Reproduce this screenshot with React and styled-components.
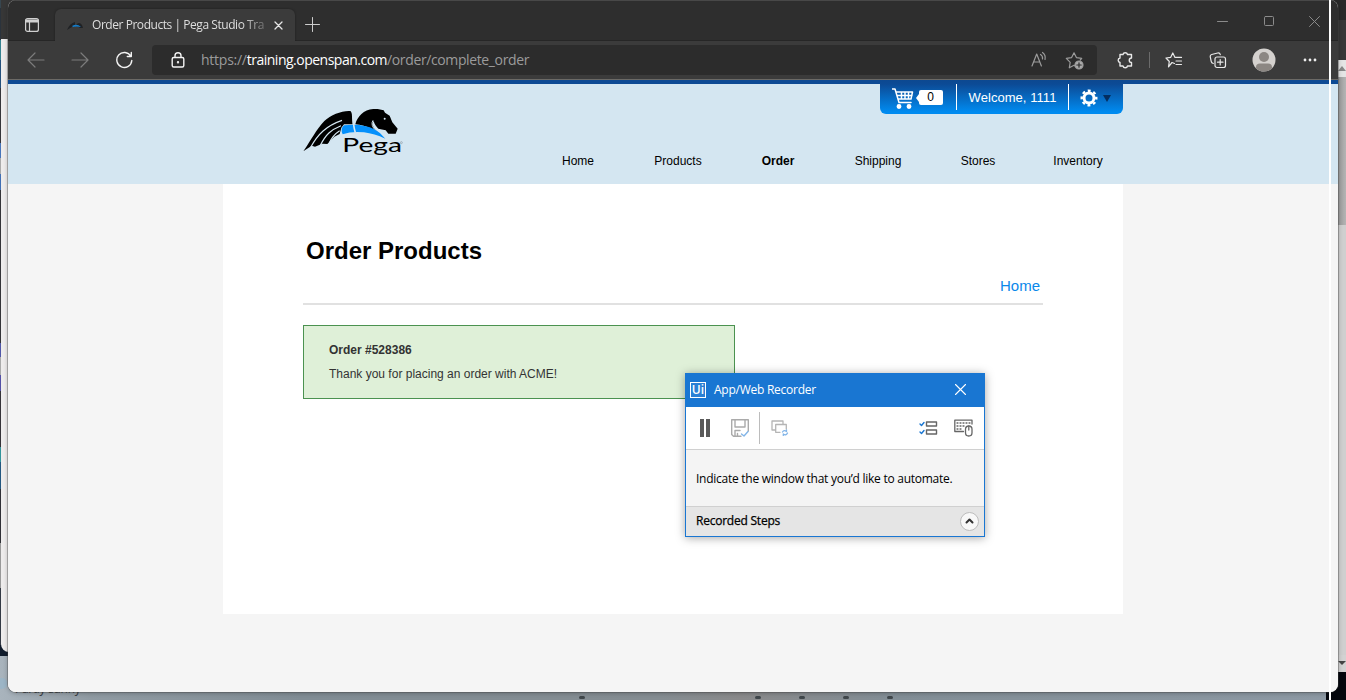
import React from "react";
import styled, { createGlobalStyle } from "styled-components";

const Global = createGlobalStyle`
  * { box-sizing: border-box; }
  html, body { margin: 0; padding: 0; overflow: hidden; }
  body { font-family: "Liberation Sans", Arial, sans-serif; }
  svg { display: block; flex: none; }
`;

const ui = `"Open Sans", "Noto Sans", sans-serif`;

const Desktop = styled.div`
  position: relative;
  width: 1346px;
  height: 700px;
  overflow: hidden;
  background: linear-gradient(90deg, #a9b4bd 0, #909ba3 90px, #818d95 300px, #858d92 660px, #8a8a8b 740px, #828e96 900px, #8d99a4 1320px);
`;
const LeftSliver = styled.div`
  position: absolute;
  left: 0;
  top: 0;
  width: 8px;
  height: 656px;
  background: linear-gradient(#37464f 0 8px, #2b333c 8px 40px, #368391 40px 60px, #24507c 60px 88px, #35353a 88px 143px, #4875ba 143px 158px, #aaa 158px 174px, #416fb4 174px 190px, #343438 190px 343px, #5057a8 343px 357px, #aaa 357px 375px, #5350a6 375px 391px, #353338 391px 447px, #32949b 447px 462px, #235780 462px 489px, #303036 489px 543px, #999 543px 588px, #333944 588px 645px, #101c2c 645px);
`;
const LeftWindow = styled.div`
  position: absolute;
  left: 1px;
  top: 0;
  width: 20px;
  height: 652px;
  border-radius: 0 0 0 8px;
  background: linear-gradient(#373737 0 39px, #eeecec 39px);
`;
const RightStack = styled.div`
  position: absolute;
  right: 0;
  top: 0;
  width: 20px;
  height: 700px;
  padding-left: 12px;
  display: flex;
  flex-direction: column;
  background: linear-gradient(#292929 0 20px, #373737 20px 60px, #cfcfcf 60px 671px, #04070d 671px);
`;
const ScrollArrow = styled.div`
  width: 8px;
  height: ${(p) => p.$h}px;
  margin-top: ${(p) => p.$gap || 0}px;
  background: ${(p) => p.$bg};
`;
const Thumb = styled.div`
  height: 148px;
  background: linear-gradient(90deg, #999, #b4b4b4);
`;
const TaskLabel = styled.div`
  position: absolute;
  left: 15px;
  top: 681px;
  font: 12px/16px ${ui};
  letter-spacing: -0.3px;
  color: #34393d;
`;
const TaskDot = styled.i`
  position: absolute;
  top: 696px;
  left: ${(p) => p.$x}px;
  width: 6px;
  height: 3px;
  border-radius: 1.5px;
  background: #40474b;
`;
const WeatherIcon = styled.i`
  position: absolute;
  left: -8px;
  top: 678px;
  width: 15px;
  height: 11px;
  border-radius: 5px;
  background: #9cb5c6;
`;

const Browser = styled.div`
  position: absolute;
  left: 8px;
  top: 0;
  width: 1330px;
  height: 692px;
  display: flex;
  flex-direction: column;
  border-radius: 8px;
  overflow: hidden;
  background: #f5f5f5;
`;
const BrowserShadow = styled.div`
  position: absolute;
  left: 8px;
  top: 0;
  width: 1330px;
  height: 692px;
  border-radius: 8px;
  box-shadow: 0 0 0 1px rgba(70, 70, 70, 0.35), 0 1px 5px rgba(0, 0, 0, 0.28);
`;
const TabStrip = styled.div`
  height: 41px;
  flex: none;
  display: flex;
  align-items: flex-end;
  background: #2e2e2e;
  border-top: 1px solid #484848;
  border-bottom: 1px solid #262626;
`;
const TabActions = styled.div`
  width: 47px;
  height: 32px;
  padding: 10px 0 0 17px;
`;
const Tab = styled.div`
  width: 240px;
  height: 32px;
  margin-bottom: -1px;
  padding: 1px 9px 0 12px;
  display: flex;
  align-items: center;
  background: #3b3b3b;
  border-radius: 6px 6px 0 0;
  box-shadow: 0 0 2px #1d1d1d;
  clip-path: inset(-3px -3px 0 -3px);
`;
const TabTitle = styled.div`
  width: 173px;
  margin-left: 9px;
  padding-bottom: 2px;
  white-space: nowrap;
  font: 12px/18px ${ui};
  letter-spacing: -0.45px;
  color: #dedede;
  mask-image: linear-gradient(90deg, #000 150px, rgba(0, 0, 0, 0.3) 172px);
`;
const TabClose = styled.div`
  margin-left: 9px;
`;
const NewTab = styled.div`
  padding: 0 0 8px 10px;
`;
const WindowControls = styled.div`
  margin-left: auto;
  display: flex;
  gap: 35px;
  align-items: center;
  padding: 0 18px 13px 0;
`;
const Toolbar = styled.div`
  height: 39px;
  flex: none;
  display: flex;
  align-items: center;
  background: #3b3b3b;
  border-bottom: 1px solid #6c6a66;
`;
const NavButtons = styled.div`
  width: 144px;
  display: flex;
  gap: 26px;
  padding-left: 19px;
`;
const AddressBar = styled.div`
  width: 945px;
  height: 30px;
  padding: 0 12px 0 17px;
  display: flex;
  align-items: center;
  border-radius: 4px;
  background: #2c2c2c;
`;
const Url = styled.div`
  margin-left: 14px;
  font: 14px/20px ${ui};
  letter-spacing: -0.38px;
  color: #9b9b9b;
  span { letter-spacing: -0.25px; }
  b { font-weight: 400; letter-spacing: -0.5px; color: #fff; }
`;
const AddressIcons = styled.div`
  margin-left: auto;
  padding-top: 1px;
  display: flex;
  gap: 17px;
`;
const ToolbarIcons = styled.div`
  display: flex;
  align-items: center;
  padding-left: 20px;
`;
const ToolDivider = styled.i`
  width: 1px;
  height: 16px;
  margin: 0 15px 0 14px;
  background: #6b6b6b;
`;
const ToolGap = styled.i`
  width: ${(p) => p.$w}px;
`;
const Avatar = styled.div`
  margin: 0 18px 0 25px;
`;

const Page = styled.div`
  flex: 1;
  background: #f5f5f5;
`;
const Band = styled.div`
  height: 104px;
  border-top: 4px solid #0e4a94;
  background: #d4e6f1;
`;
const Container = styled.div`
  width: 900px;
  margin: 0 0 0 215px;
`;
const HeaderRow = styled(Container)`
  height: 100px;
  display: flex;
  justify-content: space-between;
`;
const LogoBox = styled.div`
  padding: 25px 0 0 80px;
`;
const HeaderRight = styled.div`
  width: 595px;
  display: flex;
  flex-direction: column;
  align-items: flex-end;
`;
const UserBox = styled.div`
  width: 243px;
  height: 34px;
  margin-top: -4px;
  padding-top: 4px;
  display: flex;
  border-radius: 0 0 6px 6px;
  background: linear-gradient(#0c4891 0, #0c4a95 4px, #008bf0 32px);
  color: #fff;
`;
const UserCell = styled.div`
  width: ${(p) => p.$w}px;
  height: 26px;
  display: flex;
  align-items: center;
  justify-content: center;
  gap: ${(p) => p.$gap || 0}px;
  border-left: ${(p) => (p.$line ? "1px solid #fff" : "0")};
  font-size: 13px;
  letter-spacing: 0.05px;
  padding: 1px ${(p) => p.$pad || 0}px 0 0;
`;
const Count = styled.span`
  width: 24px;
  height: 15px;
  margin-left: 5px;
  border-radius: 2px;
  background: #fff;
  color: #000;
  font-size: 12px;
  line-height: 15px;
  text-align: center;
  position: relative;
  &::before {
    content: "";
    position: absolute;
    left: -3px;
    top: 4px;
    border: solid transparent;
    border-width: 4px 3px 4px 0;
    border-right-color: #fff;
  }
`;
const Nav = styled.nav`
  display: flex;
  margin: 38px -5px 0 0;
`;
const NavItem = styled.a`
  width: 100px;
  text-align: center;
  font-size: 12px;
  line-height: 18px;
  font-weight: ${(p) => (p.$active ? 700 : 400)};
  color: #000;
`;
const Card = styled(Container)`
  height: 430px;
  padding: 51px 80px 0;
  background: #fff;
`;
const Title = styled.h1`
  margin: 0 0 0 3px;
  font-size: 24px;
  line-height: 32px;
  color: #000;
`;
const Crumbs = styled.div`
  height: 39px;
  margin: -1px 0 20px;
  padding: 11px 3px 0 0;
  text-align: right;
  font-size: 15px;
  line-height: 18px;
  color: #0a88ea;
  border-bottom: 2px solid #e1e1e1;
`;
const Notice = styled.div`
  width: 432px;
  height: 74px;
  padding: 12px 25px;
  border: 1px solid #4b9250;
  background: #dff0d8;
  font-size: 12px;
  line-height: 24px;
  color: #333;
`;

const Recorder = styled.div`
  position: absolute;
  left: 685px;
  top: 373px;
  width: 300px;
  height: 164px;
  display: flex;
  flex-direction: column;
  border: 1px solid #1976d2;
  background: #f4f4f4;
  box-shadow: 0 1px 9px rgba(0, 0, 0, 0.35);
  font: 12px/16px ${ui};
  color: #000;
`;
const RecHead = styled.div`
  height: 33px;
  display: flex;
  align-items: center;
  padding: 0 18px 2px 4px;
  background: #1976d2;
  color: #fff;
`;
const UiBadge = styled.span`
  width: 16px;
  height: 16px;
  border: 1px solid #fff;
  font: 600 12px/13px ${ui};
  text-align: center;
  margin-right: 8px;
  background: #2a80d5;
`;
const RecTitle = styled.span`
  flex: 1;
  letter-spacing: ${(p) => p.$ls || 0}px;
`;
const RecTools = styled.div`
  height: 43px;
  display: flex;
  align-items: center;
  background: #fff;
  border-bottom: 1px solid #d0d0d0;
  padding: 0 11px 0 14px;
`;
const Pause = styled.i`
  width: 10px;
  height: 18px;
  border: solid #5a5a5a;
  border-width: 0 4px;
  margin-right: 21px;
`;
const RecDivider = styled.i`
  width: 1px;
  height: 32px;
  margin: 0 11px 0 10px;
  background: #bcbcbc;
`;
const Spacer = styled.div`
  flex: 1;
`;
const RecBody = styled.div`
  flex: 1;
  padding: 21px 0 0 10px;
  white-space: nowrap;
`;
const RecFoot = styled.div`
  height: 30px;
  display: flex;
  align-items: center;
  justify-content: space-between;
  padding: 0 5px 1px 10px;
  border-top: 1px solid #d0d0d0;
  background: #e5e5e5;
  -webkit-text-stroke: 0.25px #000;
`;
const Collapse = styled.span`
  width: 19px;
  height: 19px;
  display: flex;
  align-items: center;
  justify-content: center;
  border: 1px solid #bdbdbd;
  border-radius: 50%;
  background: #f8f8f8;
`;
const CaptureEdge = styled.i`
  position: absolute;
  left: 1329px;
  top: 0;
  width: 2px;
  height: 700px;
  background: #fff;
`;

const Icon = ({ w = 18, h, c = "#e8e8e8", sw = 1.2, children }) => (
  <svg width={w} height={h || w} viewBox={`0 0 ${w} ${h || w}`} fill="none" stroke={c} strokeWidth={sw} strokeLinecap="round" strokeLinejoin="round">
    {children}
  </svg>
);

const PegaLogo = () => (
  <svg width="100" height="50" viewBox="24 42 300 150">
    <path d="M25 169 C48 136 64 103 88 78 C108 59 142 46 166 48 Q171 51 171 65 L173 88 L147 88 L139 98 L134 117 L118 125 L97 147 L82 146 L60 155 L50 152 Z" fill="#000" />
    <path d="M47 157 C68 118 94 92 141 76 M76 151 C92 119 108 104 138 92 M103 143 Q114 120 134 107" stroke="#d4e6f1" strokeWidth="3.5" fill="none" />
    <path d="M181 88 C188 60 212 39 248 42 L266 46 L270 53 L284 62 L292 82 L308 101 L302 116 L280 116 L272 106 L250 101 C244 95 238 88 236 78 Q228 86 239 103 L270 131 C247 107 214 90 181 88 Z" fill="#000" />
    <path d="M234 76 Q225 90 243 108" stroke="#d4e6f1" strokeWidth="3" fill="none" />
    <circle cx="269" cy="71" r="3" fill="#d4e6f1" />
    <path d="M147 91 Q202 84 238 103 Q257 113 271 131 Q238 116 207 112 Q170 108 143 118 Q135 101 147 91Z" fill="#0590fb" />
    <path d="M174 47 Q173 87 181 113" stroke="#d4e6f1" strokeWidth="5" fill="none" />
    <text x="142" y="170" textLength="179" lengthAdjust="spacingAndGlyphs" fontFamily="Lato, sans-serif" fontSize="58" fill="#000">Pega</text>
    <circle cx="319" cy="143" r="3" stroke="#788792" strokeWidth="1.5" fill="none" />
  </svg>
);

const PersonIcon = () => (
  <svg width="24" height="24" viewBox="0 0 24 24">
    <defs><clipPath id="face"><circle cx="12" cy="12" r="11.5" /></clipPath></defs>
    <circle cx="12" cy="12" r="11.5" fill="#d4d1ce" />
    <g clipPath="url(#face)" fill="#8c8783"><circle cx="12" cy="9" r="5" /><path d="M4 23V19Q4 15.5 8 15.5H16Q20 15.5 20 19V24Z" /></g>
  </svg>
);

const menu = ["Home", "Products", "Order", "Shipping", "Stores", "Inventory"];

export default function App() {
  return (
    <Desktop>
      <Global />
      <LeftSliver />
      <LeftWindow />
      <RightStack>
        <ScrollArrow $h={17} $gap={60} $bg="#e5e5e5"><svg width="8" height="17"><path d="M0 11 L4 6 L8 11Z" fill="#888" /></svg></ScrollArrow>
        <Thumb />
        <ScrollArrow $h={17} $gap={430} $bg="#d2d2d2"><svg width="8" height="17"><path d="M0 6 H8 L4 10Z" fill="#444" /></svg></ScrollArrow>
      </RightStack>
      <WeatherIcon />
      <TaskLabel>Partly sunny</TaskLabel>
      {[579, 755, 799, 843, 887].map((x) => <TaskDot key={x} $x={x} />)}
      <BrowserShadow />
      <Browser>
        <TabStrip>
          <TabActions>
            <Icon w={14} c="#d0d0d0"><rect x=".6" y=".6" width="12.8" height="12.8" rx="2" /><path d="M1 2.5H13M1 3.5H13" strokeWidth="2" /><path d="M4.5 4V13" /></Icon>
          </TabActions>
          <Tab>
            <svg width="16" height="10" viewBox="0 0 16 10"><path d="M0 9 Q3 2 8 1 V6 L5 6Z M9 4 Q12 0 15 4 L16 7 L13 7Z" fill="#202225" /><path d="M5 5 Q10 2 14 6 Q9 5 6 6Z" fill="#147cc9" /></svg>
            <TabTitle>Order Products | Pega Studio Tra</TabTitle>
            <TabClose><Icon w={9} sw={1.3}><path d="M1 1L8 8M8 1L1 8" /></Icon></TabClose>
          </Tab>
          <NewTab><Icon w={15} c="#ccc" sw={1}><path d="M7.5.5V14.5M.5 7.5H14.5" /></Icon></NewTab>
          <WindowControls>
            <Icon w={11} c="#8b8b8b" sw={1}><path d="M.5 5.5H10.5" /></Icon>
            <Icon w={11} c="#8b8b8b" sw={1}><rect x="1.5" y=".5" width="9" height="9" rx="1" /></Icon>
            <Icon w={11} c="#8b8b8b" sw={1}><path d="M.5.5L10.5 10.5M10.5.5L.5 10.5" /></Icon>
          </WindowControls>
        </TabStrip>
        <Toolbar>
          <NavButtons>
            <Icon c="#7c7c7c"><path d="M1.5 9H17M8 2L1 9L8 16" /></Icon>
            <Icon c="#7c7c7c"><path d="M1 9H16.5M10 2L17 9L10 16" /></Icon>
            <Icon c="#f3f3f3" sw={1.4}><path d="M15.8 5.2A7.5 7.5 0 1 0 16.8 9.5M16.3 1.5V5.5H12.3" /></Icon>
          </NavButtons>
          <AddressBar>
            <Icon w={18} c="#f3f3f3" sw={1.4}><rect x="3.2" y="6.5" width="11.6" height="9.5" rx="1.5" /><path d="M6 6V4.8A3 3 0 0 1 12 4.8V6" /><circle cx="9" cy="11.3" r=".5" /></Icon>
            <Url><span>https://</span><b>training.openspan.com</b>/order/complete_order</Url>
            <AddressIcons>
              <Icon w={18} c="#9b9b9b"><path d="M2 15L6.7 3L11.4 15M3.7 11H9.8M10.5 3.5Q13 5 12.5 8M12.5 1.5Q16 4 15 8.5" /></Icon>
              <Icon w={20} c="#9b9b9b"><path d="M10.5 15.3L9 14.2L4.3 16.8L5.2 11.3L1.3 7.4L6.6 6.6L9 1.8L11.4 6.6L16.7 7.4L15.3 9" /><circle cx="14" cy="14" r="4" fill="#aaa" /><path d="M11.8 14H16.2M14 11.8V16.2" stroke="#2c2c2c" /></Icon>
            </AddressIcons>
          </AddressBar>
          <ToolbarIcons>
            <Icon w={18} sw={1.4}><path d="M3 3.5H6A2.3 2.3 0 0 1 10.5 3.5H14.5V7A2.1 2.1 0 0 0 14.5 11.5V15H10.5A2.3 2.3 0 0 1 6 15H3V11.5A2.3 2.3 0 0 1 3 7Z" /></Icon>
            <ToolDivider />
            <Icon w={18}><path d="M9.5 12.5L7 11.5L3.5 15.8L4.3 10.5L1 7L5.6 6.4L7.8 2L10 6.4H16.5M11 10H16.5M11 13.5H16.5" /></Icon>
            <ToolGap $w={26} />
            <Icon w={18}><path d="M4.3 12.5Q2.5 12 2.2 10.3L1.2 5.7Q1 4 2.7 3.5L8.7 2Q10.8 1.6 11.3 3.7" /><rect x="6" y="6" width="10.5" height="10.5" rx="2" /><path d="M11.2 8.5V14M8.5 11.2H14" /></Icon>
            <Avatar><PersonIcon /></Avatar>
            <svg width="34" height="6" viewBox="0 0 34 6" fill="#eee"><circle cx="11" cy="3" r="1.4" /><circle cx="16" cy="3" r="1.4" /><circle cx="21" cy="3" r="1.4" /></svg>
          </ToolbarIcons>
        </Toolbar>
        <Page>
          <Band>
            <HeaderRow>
              <LogoBox><PegaLogo /></LogoBox>
              <HeaderRight>
                <UserBox>
                  <UserCell $w={76} $pad={2}>
                    <Icon w={22} h={22} c="#fff" sw={1.5}><path d="M0 2H3L7 15.5H19M4 5H20.5L19 12H6M5 8.5H20M9.5 5V12M13 5V12M16.5 5V12" /><circle cx="7" cy="19.5" r="1.7" fill="#fff" /><circle cx="17" cy="19.5" r="1.7" fill="#fff" /></Icon>
                    <Count>0</Count>
                  </UserCell>
                  <UserCell $w={112} $line>Welcome, 1111</UserCell>
                  <UserCell $w={55} $line $gap={3}>
                    <svg width="18" height="18" viewBox="-9 -9 18 18"><circle r="5" fill="none" stroke="#fff" strokeWidth="3" /><circle r="7.3" fill="none" stroke="#fff" strokeWidth="2.4" strokeDasharray="2.9 2.833" strokeDashoffset="1.45" /></svg>
                    <svg width="12" height="8" viewBox="0 0 12 8"><path d="M2 1H10L6 8Z" fill="#042e60" /></svg>
                  </UserCell>
                </UserBox>
                <Nav>{menu.map((m) => <NavItem key={m} $active={m === "Order"}>{m}</NavItem>)}</Nav>
              </HeaderRight>
            </HeaderRow>
          </Band>
          <Card>
            <Title>Order Products</Title>
            <Crumbs>Home</Crumbs>
            <Notice><b>Order #528386</b><br />Thank you for placing an order with ACME!</Notice>
          </Card>
        </Page>
      </Browser>
      <Recorder>
        <RecHead>
          <UiBadge>Ui</UiBadge>
          <RecTitle $ls={-0.25}>App/Web Recorder</RecTitle>
          <Icon w={11} c="#fff" sw={1.1}><path d="M.5.5L10.5 10.5M10.5.5L.5 10.5" /></Icon>
        </RecHead>
        <RecTools>
          <Pause />
          <Icon w={18} c="#aaa" sw={1.4}><path d="M10 17.3H2.5L.7 15.5V.7H17.3V12M4 1V8H14V1M4 17V11.5H9M6.5 14.5V17" /><path d="M10.5 15L13 17L17 12.5" stroke="#82b5e8" /></Icon>
          <RecDivider />
          <Icon w={18} h={16} c="#b5b5b5" sw={1.3}><path d="M9 12.3H4.7V4.5H15.3V9M4 10H1V1H12V4" /><path d="M11.5 12Q13 9.5 15.5 11.5V9.8M16.5 13Q15 16 12.3 14V15.5" stroke="#82b5e8" /></Icon>
          <Spacer />
          <Icon w={19} h={16} c="#666" sw={1.4}><rect x="7.5" y="2" width="10" height="4" /><rect x="7.5" y="10" width="10" height="4" /><path d="M1 4L2.5 5.5L5 2.5M1 12L2.5 13.5L5 10.5" stroke="#1976d2" /></Icon>
          <ToolGap $w={16} />
          <Icon w={19} h={18} c="#666" sw={1.3}><path d="M9.5 12.5H.8V1.2H18V5" /><path d="M3 4H16M3 7H10M3 10H9" strokeDasharray="1 2" /><rect x="11.5" y="7" width="6.5" height="10" rx="3.2" /><path d="M14.8 7V11" /></Icon>
        </RecTools>
        <RecBody><RecTitle $ls={-0.26}>Indicate the window that you’d like to automate.</RecTitle></RecBody>
        <RecFoot>
          <RecTitle $ls={-0.23}>Recorded Steps</RecTitle>
          <Collapse><Icon w={9} h={6} c="#333" sw={2}><path d="M1.5 4.5L4.5 1.5L7.5 4.5" /></Icon></Collapse>
        </RecFoot>
      </Recorder>
      <CaptureEdge />
    </Desktop>
  );
}
